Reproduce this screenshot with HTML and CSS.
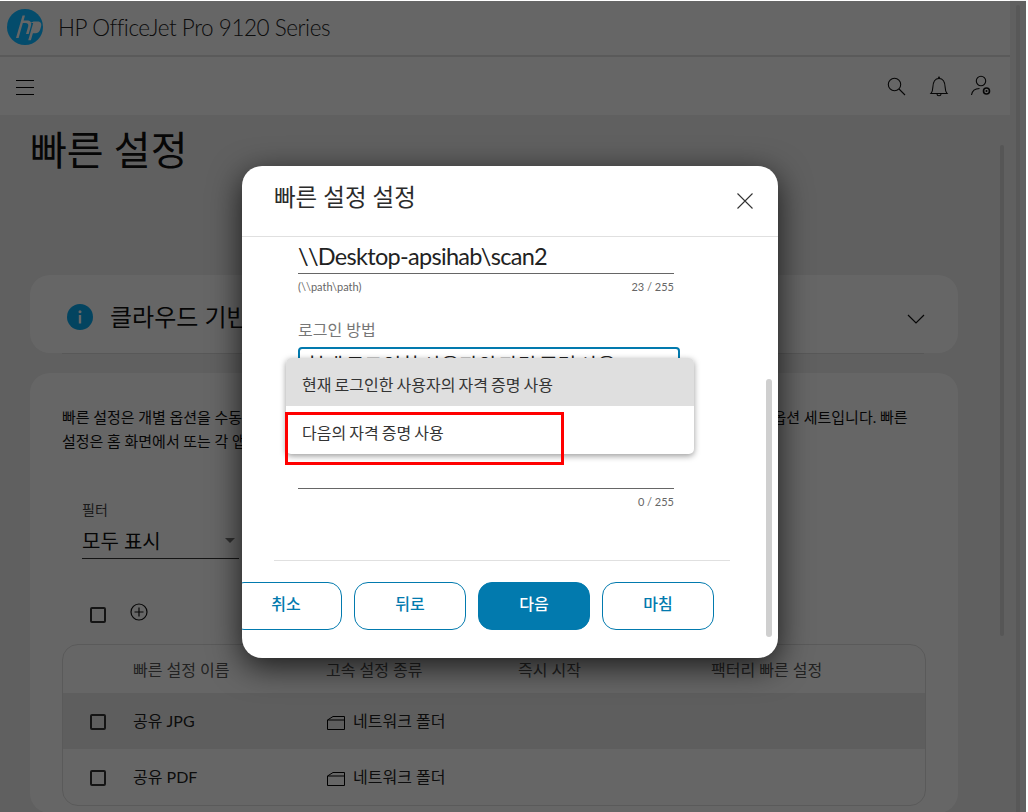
FILE: index.html
```html
<!DOCTYPE html>
<html lang="ko">
<head>
<meta charset="utf-8">
<title>빠른 설정</title>
<link rel="stylesheet" href="styles.css">
</head>
<body>
<div class="page">
  <header class="brand">
    <svg class="logo" viewBox="0 0 36 36" width="36" height="36"><circle cx="18" cy="18" r="18" fill="#044c6c"/><path d="M15.500 6.500 9 29h2.600L18 6.500zM15.200 14h3.200c2.400 0 3.300 1.300 2.800 3.200L19 25h2.700l2.300-8.200c.9-3.400-.7-5.200-4.200-5.200h-3.900zM23 14h3.200l-5 17.300h2.700l2-7h2.400c2.600 0 4.200-1.400 4.900-3.800l.9-3c.8-3-.6-4.900-3.700-4.900h-3.900z" fill="#666"/></svg>
    <span class="brand-name">HP OfficeJet Pro 9120 Series</span>
  </header>
  <nav class="toolbar">
    <svg class="menu-icon" viewBox="0 0 18 15" width="18" height="15"><path d="M0 .5h18M0 7.500h18M0 14.500h18" stroke="#000" fill="none"/></svg>
    <div class="toolbar-actions">
      <svg class="search-icon" viewBox="0 0 20 20" width="20" height="20"><circle cx="8.500" cy="8.500" r="6.200" fill="none" stroke="#111" stroke-width="1.100"/><path d="m13 13 6 6" stroke="#111" stroke-width="1.100"/></svg>
      <svg viewBox="0 0 20 22" width="20" height="22"><path d="M2 18.500c1.500-1.500 1.700-3 1.800-6C4 7 6 3.500 10 3.500s6 3.500 6.200 9c.1 3 .3 4.500 1.800 6zM8 19c0 2.400 4 2.400 4 0" fill="none" stroke="#111" stroke-width="1.100"/><path d="M8.500 3.500 10 1l1.500 2.500z" fill="#111"/></svg>
      <svg viewBox="0 0 22 22" width="22" height="22"><circle cx="11" cy="6" r="4.700" fill="none" stroke="#111" stroke-width="1.100"/><path d="M1.500 20c.6-4 3.500-6.500 8-6.500" fill="none" stroke="#111" stroke-width="1.100"/><circle cx="16.500" cy="16" r="3" fill="none" stroke="#111" stroke-width="1.600"/><circle cx="16.500" cy="16" r="1" fill="#111"/></svg>
    </div>
  </nav>
  <main class="content">
    <h1 class="page-title">빠른 설정</h1>
    <section class="card info-card">
      <svg class="info-icon" viewBox="0 0 26 26" width="26" height="26"><circle cx="13" cy="13" r="13" fill="#034460"/><rect x="11.800" y="11" width="2.400" height="8.500" fill="#666"/><circle cx="13" cy="7.800" r="1.500" fill="#666"/></svg>
      <span class="info-text">클라우드 기반 빠른 설정</span>
      <svg class="chevron" viewBox="0 0 18 10" width="18" height="10"><path d="m1 1 8 8 8-8" fill="none" stroke="#111" stroke-width="1.200"/></svg>
    </section>
    <div class="card-rule"></div>
    <section class="card list-card">
      <p class="intro">빠른 설정은 개별 옵션을 수동으로 설정하지 않고 작업을 빠르게 시작할 수 있도록 자주 사용하는 다양한 종류의 작업 옵션 세트입니다. 빠른<br>설정은 홈 화면에서 또는 각 앱에서 선택하여 사용할 수 있습니다.</p>
      <div class="filter">
        <span class="filter-label">필터</span>
        <div class="filter-value"><span>모두 표시</span><i class="caret"></i></div>
      </div>
      <div class="list-actions">
        <span class="check"></span>
        <svg viewBox="0 0 18 18" width="18" height="18"><circle cx="9" cy="9" r="8" fill="none" stroke="#111" stroke-width="1.200"/><path d="M9 4.500v9M4.500 9h9" stroke="#111" stroke-width="1.200"/></svg>
      </div>
      <div class="table">
        <div class="row head"><span class="cell-check"></span><span class="c1">빠른 설정 이름</span><span class="c2">고속 설정 종류</span><span class="c3">즉시 시작</span><span class="c4">팩터리 빠른 설정</span></div>
        <div class="row shaded"><span class="cell-check"><span class="check"></span></span><span class="c1">공유 JPG</span><span class="c2"><svg viewBox="0 0 18 15" width="18" height="15"><path d="M.5 14.500V5L6 1.500h11.500v13zM.5 5h17" fill="none" stroke="#000"/></svg>네트워크 폴더</span><span class="c3"></span><span class="c4"></span></div>
        <div class="row"><span class="cell-check"><span class="check"></span></span><span class="c1">공유 PDF</span><span class="c2"><svg viewBox="0 0 18 15" width="18" height="15"><path d="M.5 14.500V5L6 1.500h11.500v13zM.5 5h17" fill="none" stroke="#000"/></svg>네트워크 폴더</span><span class="c3"></span><span class="c4"></span></div>
      </div>
    </section>
  </main>
</div>
<div class="page-scroll"></div>
<div class="window-scroll"></div>
<div class="overlay"></div>

<div class="modal">
  <div class="modal-head">
    <h2>빠른 설정 설정</h2>
    <svg viewBox="0 0 16 16" width="16" height="16"><path d="m.5.500 15 15M15.500.500l-15 15" stroke="#333" stroke-width="1.100"/></svg>
  </div>
  <div class="modal-body">
    <div class="field-value">\\Desktop-apsihab\scan2</div>
    <div class="field-help"><span>(\\path\path)</span><span>23 / 255</span></div>
    <div class="login-label">로그인 방법</div>
    <div class="login-select">현재 로그인한 사용자의 자격 증명 사용</div>
    <div class="blank-field"></div>
    <div class="field-help count"><span>0 / 255</span></div>
  </div>
  <div class="modal-foot">
    <button class="btn">취소</button>
    <button class="btn">뒤로</button>
    <button class="btn primary">다음</button>
    <button class="btn">마침</button>
  </div>
  <div class="modal-scroll"></div>
  <ul class="dropdown">
    <li class="selected">현재 로그인한 사용자의 자격 증명 사용</li>
    <li>다음의 자격 증명 사용</li>
  </ul>
  <div class="callout"></div>
</div>
</body>
</html>
```
FILE: styles.css
```css
* { box-sizing: border-box; }
html, body { margin: 0; height: 100%; }
body {
  width: 1028px; height: 812px; overflow: hidden; position: relative; background: #fff;
  font-family: Lato, "Noto Sans CJK KR", sans-serif; color: #000;
}
.page { width: 1026px; height: 812px; overflow: hidden; background: #f0f0f0; }
.brand { width: 1010px; height: 57px; background: #fff; border-bottom: 2px solid #e0e0e0; display: flex; align-items: center; padding: 0 0 1px 7px; gap: 15px; }
.logo { position: relative; z-index: 1; }
.brand-name { font-size: 22.500px; letter-spacing: -.45px; font-weight: 300; color: #222; }
.toolbar { width: 1010px; height: 58px; background: #fff; display: flex; align-items: center; justify-content: space-between; padding: 0 0 0 16px; }
.menu-icon { margin-top: 3px; }
.toolbar-actions { display: flex; align-items: center; gap: 21px; padding-right: 18px; }
.search-icon { margin-right: 2px; }
.content { padding: 0 70px 0 30px; }
.page-title { margin: 9px 0 0; font-size: 40px; line-height: 52px; font-weight: 400; height: 151px; color: #111; }
.card { background: #fff; border-radius: 20px; width: 928px; }
.info-card { height: 78px; display: flex; align-items: center; padding: 6px 33px 0 37px; gap: 17px; }
.info-icon { position: relative; z-index: 1; flex: none; }
.info-text { font-size: 24px; flex: 1; line-height: 30px; color: #111; }
.chevron { margin-top: 3px; }
.card-rule { height: 1px; margin: 0 32px 19px; background: #dcdcdc; }
.list-card { height: 440px; padding: 32px 32px 0; }
.intro { margin: 0; font-size: 15px; line-height: 24px; word-spacing: -.2px; color: #111; white-space: nowrap; }
.filter { margin: 47px 0 0 20px; width: 157px; }
.filter-label { display: block; font-size: 14px; line-height: 20px; color: #444; }
.filter-value { display: flex; align-items: center; justify-content: space-between; height: 39px; padding-top: 3px; border-bottom: 1px solid #333; font-size: 20px; color: #111; }
.caret { border: 5px solid transparent; border-top: 5px solid #777; border-bottom: 0; margin-right: 4px; }
.list-actions { display: flex; align-items: center; gap: 24px; margin: 38px 0 0 28px; height: 36px; }
.list-actions svg { margin-bottom: 6px; }
.check { display: block; width: 16px; height: 16px; border: 2px solid #333; border-radius: 2px; }
.table { margin-top: 11px; width: 864px; height: 162px; border: 1px solid #e0e0e0; border-radius: 16px; overflow: hidden; }
.row { display: flex; align-items: center; height: 56px; font-size: 16px; color: #222; }
.row.head { height: 48px; color: #555; }
.row.shaded { background: #ececec; }
.cell-check { width: 70px; padding-left: 27px; flex: none; }
.row:not(.head) .check { margin-top: 2px; }
.c1 { width: 193px; flex: none; }
.c2 { width: 192px; flex: none; display: flex; align-items: center; gap: 8px; }
.row:not(.head) .c1, .row:not(.head) .c2 { padding-bottom: 2px; }
.row:not(.head) .c2 { padding-left: 1px; }
.row:not(.head) .c2 svg { margin-top: 4px; }
.c3 { width: 193px; flex: none; }
.overlay { position: absolute; inset: 1px 2px 0 0; background: rgba(0, 0, 0, .6); }
.page-scroll { position: absolute; top: 145px; right: 24px; width: 4px; height: 491px; border-radius: 2px; background: #d6d6d6; }
.window-scroll { position: absolute; top: 5px; bottom: 0; right: 8px; width: 4px; border-radius: 2px 2px 0 0; background: #dcdcdc; }
.modal { position: absolute; z-index: 2; left: 242px; top: 166px; width: 536px; height: 492px; background: #fff; border-radius: 20px; overflow: hidden; box-shadow: 0 8px 32px rgba(0,0,0,.75); }
.modal-head { height: 71px; border-bottom: 1px solid #e0e0e0; display: flex; justify-content: space-between; align-items: flex-start; padding: 16px 25px 0 32px; }
.modal-head h2 { margin: 0; font-size: 23.500px; line-height: 30px; font-weight: 400; color: #2b2b2b; }
.modal-head svg { margin-top: 11px; }
.modal-body { padding: 0 104px 0 56px; height: 323px; }
.field-value { height: 37px; font-size: 23.500px; letter-spacing: -.7px; line-height: 38px; color: #222; border-bottom: 1px solid #666; white-space: nowrap; }
.field-help { display: flex; justify-content: space-between; font-size: 11px; line-height: 16px; color: #666; margin-top: 5px; }
.login-label { font-size: 16px; line-height: 22px; color: #777; margin-top: 24px; }
.login-select { margin-top: 6px; width: 382px; height: 48px; border: 2px solid #027aae; border-radius: 4px; padding: 2px 6px 0; font-size: 20px; line-height: 28px; word-spacing: -2px; color: #222; overflow: hidden; white-space: nowrap; }
.blank-field { margin-top: 46px; height: 48px; border-bottom: 1px solid #666; }
.count { justify-content: flex-end; }
.modal-foot { margin: 0 48px 0 32px; padding: 21px 16px 0 0; border-top: 1px solid #e0e0e0; display: flex; justify-content: flex-end; gap: 12px; }
.btn { flex: none; width: 112px; height: 48px; border: 1px solid #027aae; border-radius: 14px; background: #fff; color: #027aae; font: 500 16px Lato, "Noto Sans CJK KR", sans-serif; padding: 0 0 6px; }
.btn.primary { background: #027aae; color: #fff; }
.modal-scroll { position: absolute; left: 524px; top: 213px; width: 6px; height: 258px; border-radius: 3px; background: #cfcfcf; }
.dropdown { position: absolute; left: 44px; top: 192px; width: 408px; margin: 0; padding: 0; list-style: none; background: #fff; border-radius: 5px; overflow: hidden; box-shadow: 0 2px 6px rgba(0,0,0,.4); }
.dropdown li { height: 48px; line-height: 53px; padding-left: 16px; font-size: 16px; word-spacing: -1px; color: #333; }
.dropdown .selected { background: #dfdfdf; }
.callout { position: absolute; left: 43px; top: 246px; width: 279px; height: 53px; border: 3px solid #f00; }
```
